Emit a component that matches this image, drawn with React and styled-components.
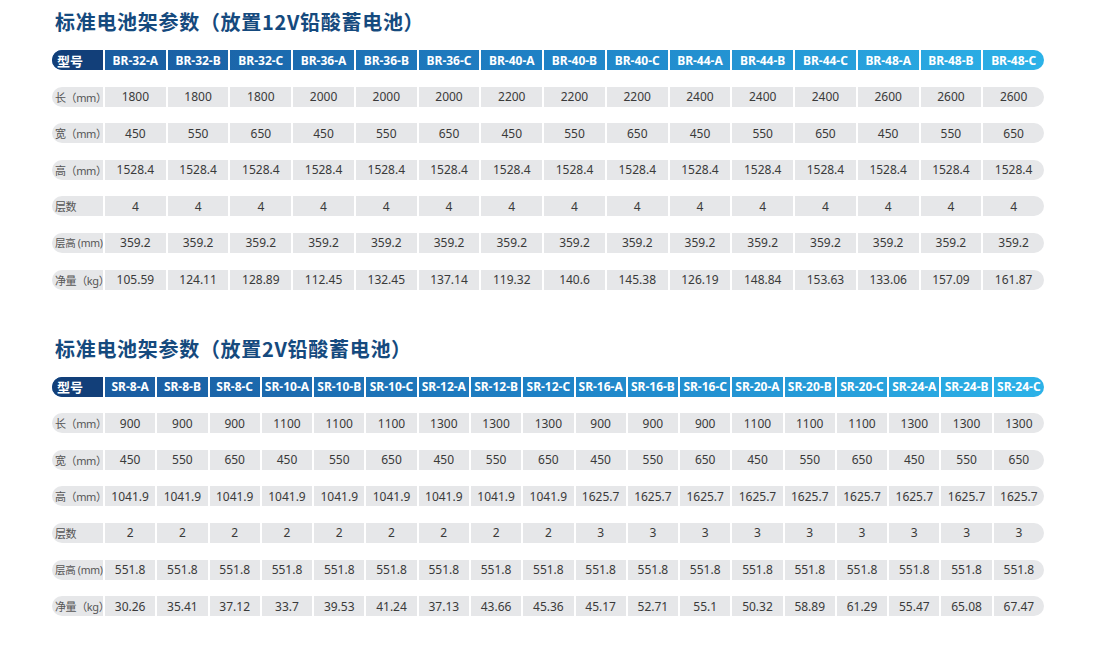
import React from "react";
import styled, { createGlobalStyle } from "styled-components";

const GlobalStyle = createGlobalStyle`
  html, body { margin: 0; padding: 0; background: #fff; }
  body { font-family: "Noto Sans", "Noto Sans CJK SC", sans-serif; }
`;

const Page = styled.div`
  width: 1095px;
  height: 645px;
  box-sizing: border-box;
  padding: 8px 51px 0 52px;
  display: flex;
  flex-direction: column;
  gap: 45px;
`;

const Section = styled.section`
  display: flex;
  flex-direction: column;
  gap: 14px;
`;

const Title = styled.h2`
  margin: 0 0 0 3px;
  height: 28px;
  line-height: 28px;
  font-family: "Noto Sans CJK SC", sans-serif;
  font-weight: 700;
  font-size: 20px;
  letter-spacing: 0.7px;
  color: #154a7e;
`;

const Table = styled.div`
  display: flex;
  flex-direction: column;
  gap: 16.6px;
`;

const Row = styled.div`
  display: grid;
  grid-template-columns: 51px repeat(${(p) => p.$n}, 1fr);
  height: 20px;
  border-radius: 10px;
  background: ${(p) =>
    p.$head ? "linear-gradient(90deg, #1a5ca0 6%, #1f82c6 50%, #2cb2e8 100%)" : "transparent"};
`;

const Cell = styled.div`
  display: flex;
  align-items: center;
  justify-content: center;
  box-sizing: border-box;
  border-left: 2px solid #fff;
  font-size: 12px;
  white-space: nowrap;
  color: ${(p) => (p.$head ? "#fff" : "#3a3a3a")};
  font-weight: ${(p) => (p.$head ? 700 : 400)};
  background: ${(p) => (p.$head ? "transparent" : "#e6e7e9")};
  &:last-child {
    border-radius: 0 10px 10px 0;
  }
`;

const LabelCell = styled.div`
  display: flex;
  align-items: center;
  padding-left: ${(p) => (p.$head ? "5px" : "3px")};
  border-radius: 10px 0 0 10px;
  font-family: "Noto Sans", "Noto Sans CJK SC", sans-serif;
  font-size: ${(p) => (p.$head ? "13px" : p.$small ? "10.5px" : "11px")};
  font-weight: ${(p) => (p.$head ? 700 : 400)};
  letter-spacing: ${(p) => (p.$head ? "0" : p.$small ? "-0.3px" : "-0.4px")};
  white-space: nowrap;
  color: ${(p) => (p.$head ? "#fff" : "#555")};
  background: ${(p) => (p.$head ? "#123f79" : "#e6e7e9")};
`;

const rep = (arr, n) => Array.from({ length: n }, (_, i) => arr[i % arr.length]);
const each = (arr, k) => arr.flatMap((v) => Array(k).fill(v));

const tables = [
  {
    title: "标准电池架参数（放置12V铅酸蓄电池）",
    models: ["32", "36", "40", "44", "48"].flatMap((s) => ["A", "B", "C"].map((l) => `BR-${s}-${l}`)),
    rows: [
      ["长（mm）", each(["1800", "2000", "2200", "2400", "2600"], 3)],
      ["宽（mm）", rep(["450", "550", "650"], 15)],
      ["高（mm）", rep(["1528.4"], 15)],
      ["层数", rep(["4"], 15)],
      ["层高 (mm)", rep(["359.2"], 15), true],
      ["净量（kg）", ["105.59", "124.11", "128.89", "112.45", "132.45", "137.14", "119.32", "140.6", "145.38", "126.19", "148.84", "153.63", "133.06", "157.09", "161.87"]],
    ],
  },
  {
    title: "标准电池架参数（放置2V铅酸蓄电池）",
    models: ["8", "10", "12", "16", "20", "24"].flatMap((s) => ["A", "B", "C"].map((l) => `SR-${s}-${l}`)),
    rows: [
      ["长（mm）", each(["900", "1100", "1300", "900", "1100", "1300"], 3)],
      ["宽（mm）", rep(["450", "550", "650"], 18)],
      ["高（mm）", [...rep(["1041.9"], 9), ...rep(["1625.7"], 9)]],
      ["层数", [...rep(["2"], 9), ...rep(["3"], 9)]],
      ["层高 (mm)", rep(["551.8"], 18), true],
      ["净量（kg）", ["30.26", "35.41", "37.12", "33.7", "39.53", "41.24", "37.13", "43.66", "45.36", "45.17", "52.71", "55.1", "50.32", "58.89", "61.29", "55.47", "65.08", "67.47"]],
    ],
  },
];

export default function App() {
  return (
    <>
      <GlobalStyle />
      <Page>
        {tables.map((t) => (
          <Section key={t.title}>
            <Title>{t.title}</Title>
            <Table>
              <Row $head $n={t.models.length}>
                <LabelCell $head>型号</LabelCell>
                {t.models.map((m) => (
                  <Cell $head key={m}>{m}</Cell>
                ))}
              </Row>
              {t.rows.map(([label, vals, small]) => (
                <Row key={label} $n={t.models.length}>
                  <LabelCell $small={small}>{label}</LabelCell>
                  {vals.map((v, i) => (
                    <Cell key={i}>{v}</Cell>
                  ))}
                </Row>
              ))}
            </Table>
          </Section>
        ))}
      </Page>
    </>
  );
}
